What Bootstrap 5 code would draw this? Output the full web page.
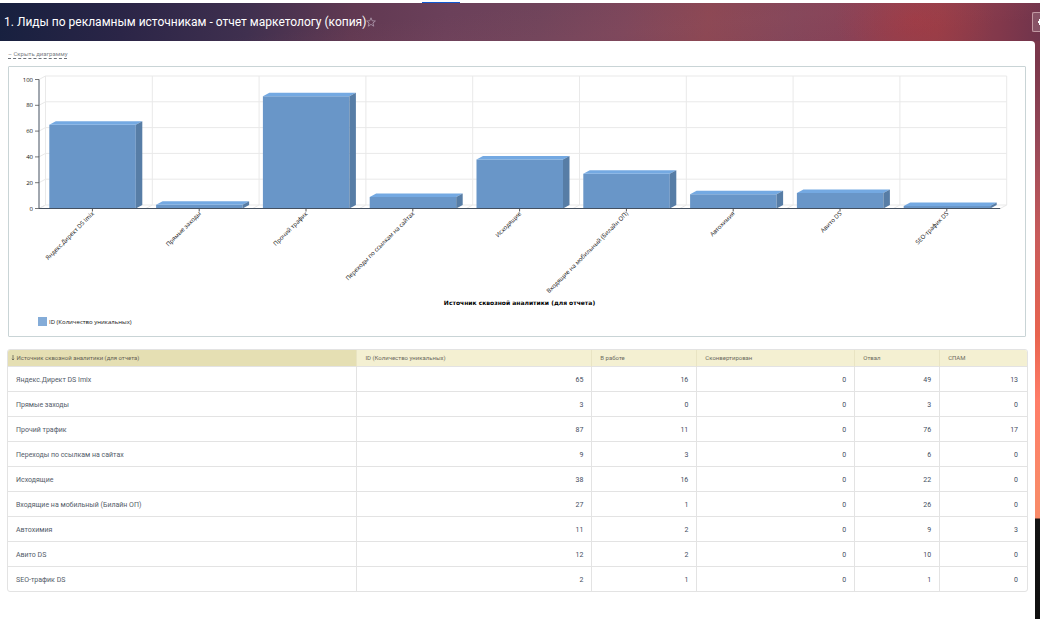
<!DOCTYPE html>
<html lang="ru">
<head>
<meta charset="utf-8">
<meta name="viewport" content="width=device-width, initial-scale=1">
<title>Лиды по рекламным источникам</title>
<link href="https://cdn.jsdelivr.net/npm/bootstrap@5.3.0/dist/css/bootstrap.min.css" rel="stylesheet">
<style>
  body {
    font-family: Roboto, "Open Sans", sans-serif;
    font-size: 7px;
    line-height: 10px;
    color: #535c69;
    background: linear-gradient(#7a374b 0, #7a374b 60px, #964858 140px, #c85b5b 235px, #e8644f 335px, #ff7d68 400px, #f98a68 490px, #f98a68 518px, #141414 519px, #101010 100%);
  }
  .top-strip { height: 3px; }
  .active-tab { width: 38px; height: 1px; background: #1058d0; margin-left: 40.6%; }
  .page-head {
    height: 38px;
    background:
      linear-gradient(174deg, transparent 40%, rgba(150,85,100,.12) 65%, transparent 85%),
      radial-gradient(ellipse 80px 60px at 88% 40%, rgba(175,55,62,.5), transparent),
      linear-gradient(97deg, #17203f 0, #2b2547 12%, #40304f 24%, #613952 34%, #6b405a 43%, #70445b 52%, #7c465b 60%, #8c4753 68%, #84465a 76%, #884257 82%, #91404b 90%, #82384b 96%, #70344c 100%);
  }
  .page-title { font-size: 12px; line-height: 18px; font-weight: 400; color: #fff; }
  .star-btn, .more-btn { line-height: 0; }
  .star-btn { color: #aa94a8; }
  .more-btn { width: 8px; height: 20px; color: #fff; background: rgba(255,255,255,.15); border: 1px solid #c299a3; border-right: 0; border-radius: 2px 0 0 2px; }
  .sheet { margin-right: 5px; border-top-right-radius: 4px; padding: 8px 8px 27px; }
  .toggle-link { color: #7c8086; font-size: 6px; line-height: 9px; border-bottom: 1px dashed #6c7178; }
  .chart-box { border: 1px solid #c9d4d6; border-radius: 1px; margin: 7px 1px 12px 0; }
  .chart-box svg { font-family: "Open Sans", "Noto Sans", sans-serif; font-size: 6px; }
  .report-wrap { margin-right: -1px; border: 1px solid #e3e3e3; border-radius: 3px; overflow: hidden; margin-left: -1px; }
  .report { table-layout: fixed; border-collapse: separate; border-spacing: 0; }
  .report th, .report td { border-left: 1px solid #e3e3e3; border-bottom: 1px solid #e3e3e3; padding: 0 8px; }
  .report tr > :first-child { border-left: 0; }
  .report thead th { height: 17px; background: #f4f0d2; color: #6d6b60; font-weight: 400; font-size: 6px; border-left-color: #e9e4c3; }
  .report thead .sorted { background: #e5dfb3; color: #666253; padding-left: 3px; }
  .report tbody tr > * { height: 25px; font-weight: 400; vertical-align: middle; padding-top: 2px; }
  .report tbody tr:last-child > * { height: 24px; border-bottom: 0; }
  .report td { text-align: right; color: #3f4d60; }
  .report td:last-child { padding-right: 9px; }
</style>
</head>
<body class="min-vh-100 d-flex flex-column">
<nav class="top-strip bg-white d-flex align-items-end flex-shrink-0" aria-label="Вкладки"><div class="active-tab"></div></nav>
<header class="page-head d-flex align-items-center flex-shrink-0">
  <h1 class="page-title mb-0 ms-1 text-nowrap">1. Лиды по рекламным источникам - отчет маркетологу (копия)</h1>
  <button class="star-btn btn p-0 border-0" type="button" aria-label="В избранное">
    <svg width="10" height="10" viewBox="0 0 10 10" fill="none" stroke="currentColor" stroke-width=".9"><path d="M5 .8 6.2 3.8 9.4 4 6.9 6 7.8 9.2 5 7.4 2.2 9.2 3.1 6 .6 4 3.8 3.8Z"/></svg>
  </button>
  <button class="more-btn btn p-0 ms-auto overflow-hidden text-end" type="button" aria-label="Настройки">
    <svg width="2" height="6" viewBox="0 0 2 6"><path d="M0 2h1V0h1v6H1V4H0z" fill="currentColor"/></svg>
  </button>
</header>
<main class="sheet bg-white flex-grow-1">
  <div class="d-flex"><a href="#chart" class="toggle-link text-decoration-none">– Скрыть диаграмму</a></div>
  <section class="chart-box" id="chart">
    <svg class="d-block w-100 h-auto" id="plot" viewBox="9 67 1016 269" role="img" aria-label="Источник сквозной аналитики"></svg>
  </section>
  <div class="report-wrap">
    <table class="report w-100">
      <colgroup><col style="width:34.2%"><col style="width:23.05%"><col style="width:10.3%"><col style="width:15.5%"><col style="width:8.33%"><col></colgroup>
      <thead><tr>
        <th scope="col" class="sorted"><svg width="4" height="6" viewBox="0 0 4 6" fill="none" stroke="currentColor" stroke-width=".8"><path d="M2 0v5M.8 3.8 2 5l1.2-1.2"/></svg> Источник сквозной аналитики (для отчета)</th>
        <th scope="col">ID (Количество уникальных)</th><th scope="col">В работе</th><th scope="col">Сконвертирован</th><th scope="col">Отвал</th><th scope="col">СПАМ</th>
      </tr></thead>
      <tbody>
        <tr><th scope="row">Яндекс.Директ DS Imix</th><td>65</td><td>16</td><td>0</td><td>49</td><td>13</td></tr>
        <tr><th scope="row">Прямые заходы</th><td>3</td><td>0</td><td>0</td><td>3</td><td>0</td></tr>
        <tr><th scope="row">Прочий трафик</th><td>87</td><td>11</td><td>0</td><td>76</td><td>17</td></tr>
        <tr><th scope="row">Переходы по ссылкам на сайтах</th><td>9</td><td>3</td><td>0</td><td>6</td><td>0</td></tr>
        <tr><th scope="row">Исходящие</th><td>38</td><td>16</td><td>0</td><td>22</td><td>0</td></tr>
        <tr><th scope="row">Входящие на мобильный (Билайн ОП)</th><td>27</td><td>1</td><td>0</td><td>26</td><td>0</td></tr>
        <tr><th scope="row">Автохимия</th><td>11</td><td>2</td><td>0</td><td>9</td><td>3</td></tr>
        <tr><th scope="row">Авито DS</th><td>12</td><td>2</td><td>0</td><td>10</td><td>0</td></tr>
        <tr><th scope="row">SEO-трафик DS</th><td>2</td><td>1</td><td>0</td><td>1</td><td>0</td></tr>
      </tbody>
    </table>
  </div>
</main>
<script src="https://cdn.jsdelivr.net/npm/bootstrap@5.3.0/dist/js/bootstrap.bundle.min.js"></script>
<script>
  // Column chart with a shallow 3D depth, drawn from the first two table columns.
  const rows = [...document.querySelectorAll('.report tbody tr')].map(r => [r.cells[0].textContent, +r.cells[1].textContent]);
  const left = 39, base = 208.5, unit = 1.29, step = 106.8, dx = 6.5, dy = 3.5;
  const right = left + step * rows.length;
  let grid = '', bars = '', labels = '';
  for (let v = 0; v <= 100; v += 20) {
    const y = base - v * unit;
    grid += `<path d="M${left} ${y}l${dx} ${-dy}H${right + dx}" stroke="#e9e9e9"/><path d="M${left - 4} ${y}h4" stroke="#777"/>`;
    labels += `<text x="33" y="${y + 2}" text-anchor="end">${v}</text>`;
  }
  for (let i = 0; i <= rows.length; i++) {
    const x = left + i * step;
    grid += `<path d="M${x} ${base}l${dx} ${-dy}V${base - dy - 100 * unit}" stroke="#e9e9e9"/>`;
  }
  rows.forEach(([name, v], i) => {
    const x = left + i * step + 10.3, w = 86.5, h = v * unit, y = base - h, c = left + (i + .5) * step;
    bars += `<path d="M${x} ${y}h${w}v${h}h${-w}z" fill="#6996c8"/>` +
      `<path d="M${x} ${y}l${dx} ${-dy}h${w}l${-dx} ${dy}z" fill="#74a9e2"/>` +
      `<path d="M${x + w} ${y}l${dx} ${-dy}v${h}l${-dx} ${dy}z" fill="#577da6"/>` +
      `<path d="M${c} ${base}v3" stroke="#555"/>`;
    labels += `<text text-anchor="end" transform="translate(${c + 2} 214) rotate(-45)">${name}</text>`;
  });
  document.getElementById('plot').innerHTML =
    `<g fill="none">${grid}</g>${bars}<path d="M${left} ${base - 100 * unit}V${base}H${right}" fill="none" stroke="#445060"/>` +
    `<g fill="#111">${labels}</g>` +
    `<text x="519.5" y="305" text-anchor="middle" font-family="DejaVu Sans, sans-serif" font-weight="700" fill="#000">Источник сквозной аналитики (для отчета)</text>` +
    `<rect x="38" y="317" width="9" height="9" fill="#84acd8"/><text x="49" y="324" fill="#111">ID (Количество уникальных)</text>`;
</script>
</body>
</html>
